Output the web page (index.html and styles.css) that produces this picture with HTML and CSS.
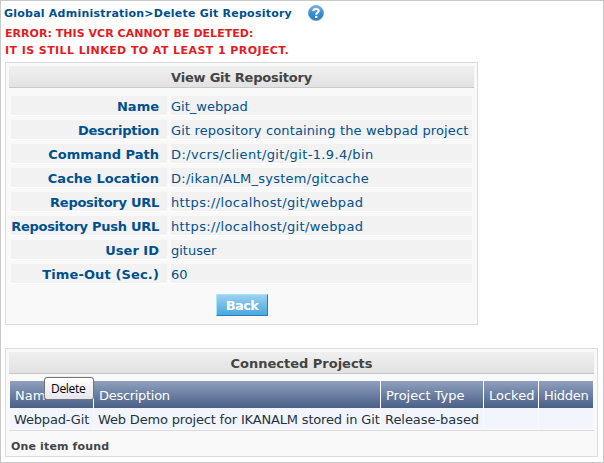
FILE: index.html
```html
<!DOCTYPE html>
<html lang="en">
<head>
<meta charset="utf-8">
<title>Delete Git Repository</title>
<link rel="stylesheet" href="styles.css">
</head>
<body>
<main class="page">
  <header class="crumbs">
    <span class="crumb-text">Global Administration&gt;Delete Git Repository</span>
    <svg class="help" viewBox="0 0 16 16" width="16" height="16">
      <defs><linearGradient id="ball" x1="0" y1="0" x2="0" y2="1"><stop offset="0" stop-color="#82b3e2"/><stop offset=".5" stop-color="#3a8fd0"/><stop offset=".8" stop-color="#2789cb"/><stop offset="1" stop-color="#4b7ca8"/></linearGradient></defs>
      <circle cx="8" cy="8" r="7.6" fill="url(#ball)" stroke="#5b8fc0" stroke-width=".6"/>
      <path d="M5.2 6C5.400 4.500 6.500 4 8 4c1.700 0 2.700.7 2.700 2C10.700 7.600 8.200 7.600 8.200 9.700" fill="none" stroke="#fff" stroke-width="2.200"/>
      <rect x="7" y="10.900" width="2.400" height="2.100" fill="#fff"/>
    </svg>
  </header>
  <div class="error"><div class="err1">ERROR: THIS VCR CANNOT BE DELETED:</div><div class="err2">IT IS STILL LINKED TO AT LEAST 1 PROJECT.</div></div>

  <section class="panel repo">
    <h2 class="title tight">View Git Repository</h2>
    <dl class="fields">
      <dt>Name</dt><dd>Git_webpad</dd>
      <dt class="snug">Description</dt><dd class="wide-s">Git repository containing the webpad project</dd>
      <dt>Command Path</dt><dd class="wide-l">D:/vcrs/client/git/git-1.9.4/bin</dd>
      <dt>Cache Location</dt><dd class="wide-m">D:/ikan/ALM_system/gitcache</dd>
      <dt class="snug">Repository URL</dt><dd class="wide-l">https://localhost/git/webpad</dd>
      <dt class="snug">Repository Push URL</dt><dd class="wide-l">https://localhost/git/webpad</dd>
      <dt>User ID</dt><dd>gituser</dd>
      <dt class="loose">Time-Out (Sec.)</dt><dd>60</dd>
    </dl>
    <button class="back">Back</button>
  </section>

  <section class="panel projects">
    <h2 class="title">Connected Projects</h2>
    <div class="grid head">
      <div class="name-head">Name<span class="tip">Delete</span></div><div class="squeeze">Description</div><div>Project Type</div><div>Locked</div><div class="squeeze">Hidden</div>
    </div>
    <div class="grid row">
      <div>Webpad-Git</div><div>Web Demo project for IKANALM stored in Git</div><div class="type">Release-based</div><div></div><div></div>
    </div>
    <div class="found">One item found</div>
  </section>
</main>
</body>
</html>
```
FILE: styles.css
```css
* { box-sizing: border-box; }
body { margin: 0; background: #fff; font: 13px "DejaVu Sans", Verdana, sans-serif; color: #00508c; }
.page { width: 604px; height: 463px; border: 1px solid #c8c8c8; padding: 4px; overflow: hidden; }
.crumbs { display: flex; height: 20px; }
.crumb-text { width: 304px; margin-left: -1px; line-height: 18px; font-size: 11px; font-weight: bold; letter-spacing: .23px; white-space: nowrap; }
.help { display: block; }
.error { height: 37px; color: #e31b23; font-size: 11px; font-weight: bold; line-height: 17px; white-space: nowrap; }
.err1 { letter-spacing: .04px; }
.err2 { letter-spacing: .42px; }
.panel { border: 1px solid #dcdcdc; background: #f9f9f9; padding: 3px; }
.title { margin: 0; height: 22px; line-height: 24px; font-size: 13px; font-weight: bold; text-align: center; color: #444; background: linear-gradient(#f0f0f0, #e2e2e2); border-bottom: 1px solid #c8c8c8; }
.tight { letter-spacing: -.2px; }
.repo { width: 473px; height: 263px; }
.fields { margin: 8px 2px 0; display: grid; grid-template-columns: 156px 301px; column-gap: 4px; row-gap: 4px; }
.fields dt, .fields dd { margin: 0; height: 20px; line-height: 22px; background: #f2f2f2; border-bottom: 1px solid #fff; white-space: nowrap; }
.fields dt { font-weight: bold; display: flex; justify-content: flex-end; padding-right: 8px; }
.fields .snug { letter-spacing: -.27px; }
.fields .loose { letter-spacing: .13px; }
.wide-s { letter-spacing: .14px; }
.wide-m { letter-spacing: .26px; }
.wide-l { letter-spacing: .37px; }
.back { display: block; margin: 10px 0 0 207px; width: 52px; height: 22px; padding: 1px 0 0; border: 1px solid; border-color: #aae6fa #2382be #2382be #aae6fa; background: linear-gradient(#9bd0f0, #4aa8de); font: bold 13px/20px "DejaVu Sans", Verdana, sans-serif; letter-spacing: -.6px; color: #fff; }
.projects { width: 593px; height: 109px; margin-top: 23px; }
.grid { display: grid; grid-template-columns: 83px 286px 102px 54px 54px; column-gap: 1px; white-space: nowrap; }
.head { margin: 7px 1px 0; height: 27px; grid-template-rows: 27px; line-height: 29px; color: #fff; background: #fff; }
.head > div { padding-left: 5px; background: linear-gradient(#8f9fbe, #4a6087); }
.head .squeeze { letter-spacing: -.3px; }
.row { height: 23px; grid-template-rows: 21px; padding: 0 1px 1px; line-height: 23px; border-bottom: 1px solid #dcdcdc; color: #26323e; }
.row > div { padding-left: 4px; background: #f2f6fc; letter-spacing: -.17px; }
.row .type { letter-spacing: -.05px; }
.name-head { position: relative; }
.tip { position: absolute; left: 34px; top: -4px; width: 50px; height: 23px; border: 1px solid #767676; border-radius: 3px; background: linear-gradient(#fff, #e4e5f0); box-shadow: 0 0 1px #888; color: #000; font: 12px/22px "Open Sans", sans-serif; letter-spacing: -.3px; padding-left: 6px; }
.found { margin: 7px 0 0 2px; line-height: 17px; font-size: 11px; font-weight: bold; letter-spacing: .15px; color: #444; }
```
